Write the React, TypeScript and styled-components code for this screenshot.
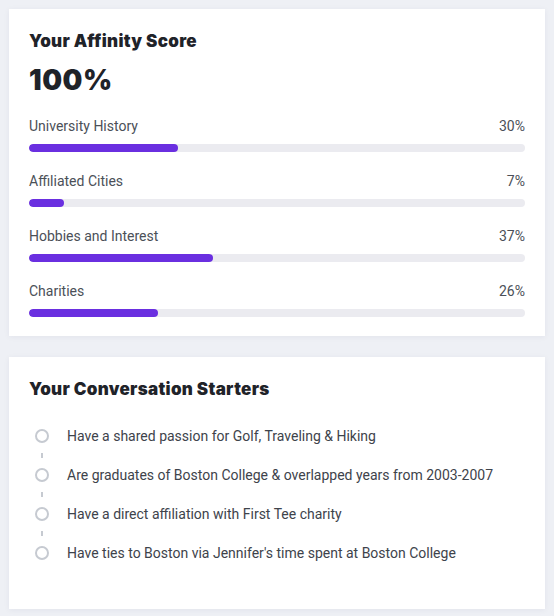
import styled, { createGlobalStyle } from "styled-components";

const GlobalStyle = createGlobalStyle`
  body {
    margin: 0;
    background: #eef0f5;
    font-family: Roboto, "Noto Sans", sans-serif;
    color: #23272d;
  }
`;

const Page = styled.div`
  display: flex;
  flex-direction: column;
  gap: 21px;
  padding: 9px;
  width: 554px;
  box-sizing: border-box;
`;

const Card = styled.section<{ $bottom: number }>`
  background: #ffffff;
  padding: 20px 20px ${(p) => p.$bottom}px;
  box-shadow: 0 1px 6px rgba(30, 40, 90, 0.06);
`;

const Title = styled.h2`
  margin: 0;
  font-family: Inter, sans-serif;
  font-size: 17px;
  line-height: 24px;
  font-weight: 900;
  letter-spacing: 0.3px;
  color: #1f2329;
`;

const Score = styled.div`
  margin-top: 10px;
  font-family: Inter, sans-serif;
  font-size: 28px;
  line-height: 34px;
  font-weight: 900;
  letter-spacing: 0.5px;
  color: #1f2329;
`;

const Metrics = styled.div`
  display: flex;
  flex-direction: column;
  gap: 19px;
  margin-top: 19px;
`;

const MetricHead = styled.div`
  display: flex;
  justify-content: space-between;
  font-size: 14px;
  line-height: 20px;
  color: #4b5058;
  margin-bottom: 8px;
`;

const Track = styled.div`
  height: 8px;
  border-radius: 4px;
  background: #ebebf0;
  overflow: hidden;
`;

const Fill = styled.div`
  height: 100%;
  border-radius: 4px;
  background: #6a2fe0;
`;

const Starters = styled.ul`
  list-style: none;
  margin: 25px 0 0;
  padding: 0 0 0 6px;
  display: flex;
  flex-direction: column;
  gap: 19px;
`;

const Starter = styled.li`
  position: relative;
  display: flex;
  align-items: center;
  gap: 18px;
  font-size: 14px;
  line-height: 20px;
  color: #3e434b;
  white-space: nowrap;

  &:not(:last-child)::after {
    content: "";
    position: absolute;
    left: 6px;
    top: 27px;
    width: 1.5px;
    height: 5px;
    background: #c6cad1;
  }
`;

const Dot = styled.span`
  flex: none;
  width: 14px;
  height: 14px;
  box-sizing: border-box;
  border-radius: 50%;
  border: 2px solid #c6cad1;
`;

const metrics = [
  { label: "University History", value: 30 },
  { label: "Affiliated Cities", value: 7 },
  { label: "Hobbies and Interest", value: 37 },
  { label: "Charities", value: 26 },
];

const starters = [
  "Have a shared passion for Golf, Traveling & Hiking",
  "Are graduates of Boston College & overlapped years from 2003-2007",
  "Have a direct affiliation with First Tee charity",
  "Have ties to Boston via Jennifer's time spent at Boston College",
];

const App = () => {
  return (
    <Page>
      <GlobalStyle />
      <Card $bottom={19}>
        <Title>Your Affinity Score</Title>
        <Score>100%</Score>
        <Metrics>
          {metrics.map((m) => (
            <div key={m.label}>
              <MetricHead>
                <span>{m.label}</span>
                <span>{m.value}%</span>
              </MetricHead>
              <Track>
                <Fill style={{ width: `${m.value}%` }} />
              </Track>
            </div>
          ))}
        </Metrics>
      </Card>
      <Card $bottom={46}>
        <Title>Your Conversation Starters</Title>
        <Starters>
          {starters.map((s) => (
            <Starter key={s}>
              <Dot />
              {s}
            </Starter>
          ))}
        </Starters>
      </Card>
    </Page>
  );
};

export default App;
